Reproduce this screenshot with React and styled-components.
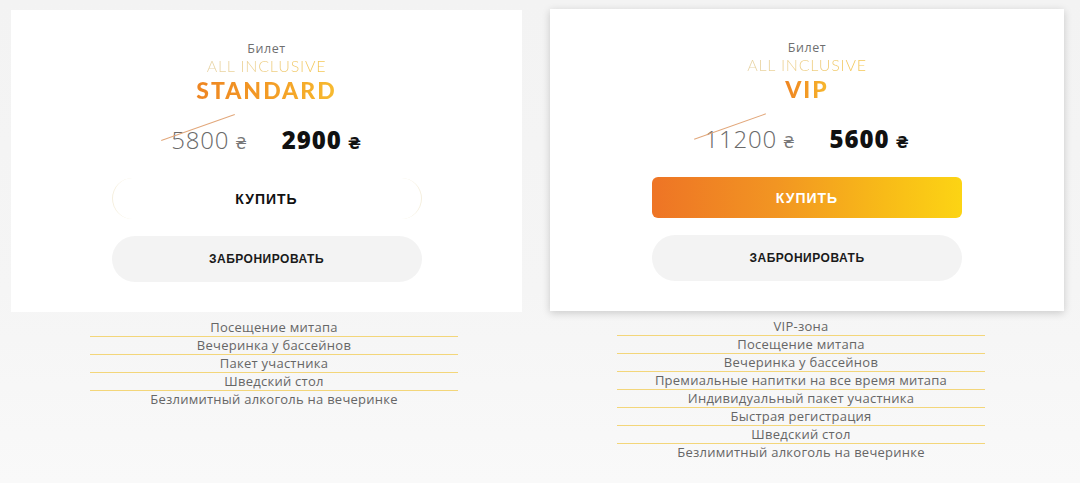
import React from "react";
import styled, { createGlobalStyle, css } from "styled-components";

const Global = createGlobalStyle`
  html, body { margin: 0; padding: 0; }
  body {
    background: #f4f4f4;
    font-family: "Open Sans", "DejaVu Sans", sans-serif;
    width: 1080px;
    height: 483px;
    overflow: hidden;
  }
`;

const Page = styled.div`
  display: flex;
  align-items: flex-start;
  gap: 28px;
  padding: 9px 0 0 11px;
  height: 483px;
  box-sizing: border-box;
  background: linear-gradient(180deg, #f3f3f3 0%, #f5f5f5 60%, #f9f9f9 100%);
`;

const Column = styled.div`
  display: flex;
  flex-direction: column;
  width: ${(p) => p.$w}px;
  margin-top: ${(p) => p.$top}px;
`;

const Card = styled.div`
  background: #fff;
  height: 302px;
  box-sizing: border-box;
  padding-top: 31px;
  display: flex;
  flex-direction: column;
  align-items: center;
  ${(p) =>
    p.$raised &&
    css`
      box-shadow: 0 2px 8px rgba(0, 0, 0, 0.18);
    `}
`;

const Label = styled.div`
  font-size: 12.5px;
  line-height: 15px;
  color: #6f6f6f;
  letter-spacing: 0.6px;
`;

const Subtitle = styled.div`
  font-family: Lato, "Open Sans", sans-serif;
  font-size: 16px;
  line-height: 19px;
  font-weight: 300;
  letter-spacing: 0.8px;
  background: linear-gradient(90deg, #e6d2a4 0%, #eecb78 60%, #f4c449 100%);
  -webkit-background-clip: text;
  background-clip: text;
  color: transparent;
`;

const Title = styled.div`
  margin-top: 1px;
  font-family: Lato, "Open Sans", sans-serif;
  font-size: 23px;
  line-height: 28px;
  font-weight: 900;
  letter-spacing: 2px;
  background: linear-gradient(90deg, #ee8522 0%, #f39b25 50%, #f7bb30 100%);
  -webkit-background-clip: text;
  background-clip: text;
  color: transparent;
`;

const PriceRow = styled.div`
  display: flex;
  align-items: baseline;
  gap: 34px;
  margin-top: 21px;
  height: 30px;
`;

const OldPrice = styled.div`
  position: relative;
  font-size: 24px;
  font-weight: 300;
  letter-spacing: 0.8px;
  color: #6a6a6a;
  line-height: 30px;
  &::after {
    content: "";
    position: absolute;
    left: -12px;
    top: 2px;
    width: ${(p) => p.$line}px;
    height: 1px;
    background: #e2a77a;
    transform: rotate(-19.5deg);
    transform-origin: center;
  }
`;

const NewPrice = styled.div`
  font-size: 24px;
  font-weight: 800;
  letter-spacing: 1px;
  color: #111;
  line-height: 30px;
`;

const Currency = styled.span`
  font-size: 15px;
  margin-left: 6px;
  font-weight: ${(p) => (p.$bold ? 800 : 400)};
  color: ${(p) => (p.$bold ? "#111" : "#777")};
`;

const buttonBase = css`
  width: 310px;
  box-sizing: border-box;
  display: flex;
  align-items: center;
  justify-content: center;
  font-family: "Liberation Sans", Arial, sans-serif;
  font-weight: 700;
  border: none;
  cursor: pointer;
`;

const BuyButton = styled.button`
  ${buttonBase};
  height: 41px;
  margin-top: 23px;
  font-size: 14px;
  letter-spacing: 1px;
  ${(p) =>
    p.$primary
      ? css`
          border-radius: 6px;
          color: #fff;
          background: linear-gradient(90deg, #ee7425 0%, #f29522 40%, #f8bb18 75%, #fcd414 100%);
        `
      : css`
          border-radius: 21px;
          color: #111;
          background: #fff;
          border-left: 1px solid #f5efde;
          border-right: 1px solid #f5efde;
        `}
`;

const ReserveButton = styled.button`
  ${buttonBase};
  height: 46px;
  margin-top: 17px;
  border-radius: 23px;
  background: #f3f3f3;
  color: #1a1a1a;
  font-size: 12px;
  letter-spacing: 0.5px;
`;

const Features = styled.ul`
  list-style: none;
  margin: 7px 0 0 ${(p) => p.$offset}px;
  padding: 0;
  width: 368px;
`;

const Feature = styled.li`
  text-align: center;
  font-size: 13px;
  letter-spacing: 0.25px;
  line-height: 17px;
  color: #666;
  border-bottom: 1px solid #f3d67a;
  &:last-child {
    border-bottom: none;
  }
`;

const plans = [
  {
    name: "STANDARD",
    old: "5800",
    price: "2900",
    line: 78,
    primary: false,
    width: 511,
    top: 1,
    offset: 79,
    features: [
      "Посещение митапа",
      "Вечеринка у бассейнов",
      "Пакет участника",
      "Шведский стол",
      "Безлимитный алкоголь на вечеринке",
    ],
  },
  {
    name: "VIP",
    old: "11200",
    price: "5600",
    line: 76,
    primary: true,
    width: 514,
    top: 0,
    offset: 67,
    features: [
      "VIP-зона",
      "Посещение митапа",
      "Вечеринка у бассейнов",
      "Премиальные напитки на все время митапа",
      "Индивидуальный пакет участника",
      "Быстрая регистрация",
      "Шведский стол",
      "Безлимитный алкоголь на вечеринке",
    ],
  },
];

export default function App() {
  return (
    <>
      <Global />
      <Page>
        {plans.map((p) => (
          <Column key={p.name} $w={p.width} $top={p.top}>
            <Card $raised={p.primary}>
              <Label>Билет</Label>
              <Subtitle>ALL INCLUSIVE</Subtitle>
              <Title>{p.name}</Title>
              <PriceRow>
                <OldPrice $line={p.line}>
                  {p.old}
                  <Currency>₴</Currency>
                </OldPrice>
                <NewPrice>
                  {p.price}
                  <Currency $bold>₴</Currency>
                </NewPrice>
              </PriceRow>
              <BuyButton $primary={p.primary}>КУПИТЬ</BuyButton>
              <ReserveButton>ЗАБРОНИРОВАТЬ</ReserveButton>
            </Card>
            <Features $offset={p.offset}>
              {p.features.map((f) => (
                <Feature key={f}>{f}</Feature>
              ))}
            </Features>
          </Column>
        ))}
      </Page>
    </>
  );
}
